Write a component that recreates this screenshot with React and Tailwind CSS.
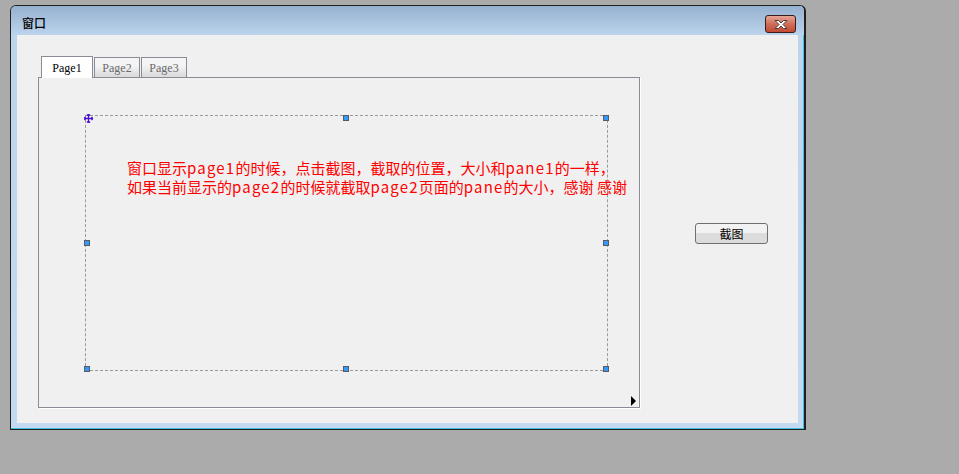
import React from 'react'

const cjk = '"Noto Sans CJK SC", "Liberation Sans", sans-serif'

function Handle({ className }) {
  return <div className={`absolute w-[6px] h-[6px] bg-[#3399ff] border border-[#5a5a5a] ${className}`} />
}

function Tab({ label, active }) {
  if (active) {
    return (
      <div className="relative z-10 -mb-px h-[22px] w-[52px] border border-b-0 border-[#898c95] bg-white flex items-center justify-center text-[12px] text-black font-['Liberation_Serif',serif]">
        {label}
      </div>
    )
  }
  return (
    <div className="h-[20px] w-[46px] border border-b-0 border-[#898c95] bg-gradient-to-b from-[#f4f4f4] from-40% to-[#d9d9d9] flex items-center justify-center text-[12px] text-[#6a6a6a] font-['Liberation_Serif',serif]">
      {label}
    </div>
  )
}

export default function App() {
  return (
    <div className="w-[959px] h-[474px] bg-[#ababab] pl-[10px] pt-[5px]" style={{ fontFamily: cjk }}>
      <div className="w-[796px] h-[425px] border border-[#202020] border-r-2 rounded-t-[6px] overflow-hidden bg-gradient-to-b from-[#bcd4ec] to-[#c4daf0] flex flex-col">
        {/* title bar */}
        <div className="h-[29px] shrink-0 flex items-start justify-between pl-[11px] pr-[8px] bg-gradient-to-b from-[#96b1d0] to-[#bcd4ec]">
          <span className="mt-[10px] text-[12px] leading-[14px] text-black font-medium">窗口</span>
          <div className="mt-[9px] w-[31px] h-[18px] rounded-[3px] border border-[#3a1c1c] bg-gradient-to-b from-[#e6a595] via-[#d06d58] via-50% to-[#c14a33] flex items-center justify-center">
            <svg width="16" height="11" viewBox="0 0 16 11">
              <path d="M2 1.5 L5.5 1.5 L8 4 L10.5 1.5 L14 1.5 L10 5.5 L14 9.5 L10.5 9.5 L8 7 L5.5 9.5 L2 9.5 L6 5.5 Z" fill="#ffffff" stroke="#4a3a3a" strokeWidth="1" strokeLinejoin="round" />
            </svg>
          </div>
        </div>
        {/* frame + client */}
        <div className="flex-1 flex pl-[6px] pr-[5px] pb-[5px] border-r border-b border-r-[#3ec0e0] border-b-[#3ec0e0]">
          <div className="flex-1 bg-[#f0f0f0] flex items-start pl-[21px] pt-[21px]">
            <div className="flex flex-col">
              {/* tabs */}
              <div className="flex items-end pl-[3px] gap-px">
                <Tab label="Page1" active />
                <Tab label="Page2" />
                <Tab label="Page3" />
              </div>
              {/* pane */}
              <div className="relative w-[602px] h-[331px] border border-[#898c95] bg-[#f0f0f0] shadow-[1px_1px_0_#ffffff] pl-[46px] pt-[37px]">
                <div className="relative w-[523px] h-[256px] border border-dashed border-[#9a9a9a] pl-[41px] pt-[42px]">
                  <div className="text-[15px] leading-[19px] text-[#ff0000] whitespace-nowrap">
                    <div>窗口显示<span className="tracking-[1.2px]">page1</span>的时候，点击截图，截取的位置，大小和<span className="tracking-[1.2px]">pane1</span>的一样，</div>
                    <div>如果当前显示的<span className="tracking-[1.2px]">page2</span>的时候就截取<span className="tracking-[1.2px]">page2</span>页面的<span className="tracking-[1.2px]">pane</span>的大小，感谢 感谢</div>
                  </div>
                  {/* move handle */}
                  <svg className="absolute -left-[2px] -top-[2px]" width="9" height="9" viewBox="0 0 9 9">
                    <path d="M4.5 0 L4.5 9 M0 4.5 L9 4.5 M3 1.5 L4.5 0 L6 1.5 M3 7.5 L4.5 9 L6 7.5 M1.5 3 L0 4.5 L1.5 6 M7.5 3 L9 4.5 L7.5 6" stroke="#4a10d8" strokeWidth="1.3" fill="none" />
                  </svg>
                  <Handle className="left-[257px] -top-px" />
                  <Handle className="-right-[2px] -top-px" />
                  <Handle className="-left-[2px] top-[124px]" />
                  <Handle className="-right-[2px] top-[124px]" />
                  <Handle className="-left-[2px] -bottom-[2px]" />
                  <Handle className="left-[257px] -bottom-[2px]" />
                  <Handle className="-right-[2px] -bottom-[2px]" />
                </div>
                <svg className="absolute right-[2px] bottom-px" width="6" height="10" viewBox="0 0 6 10">
                  <path d="M0 0 L5 5 L0 10 Z" fill="#000" />
                </svg>
              </div>
            </div>
            <button className="ml-[55px] mt-[167px] w-[73px] h-[21px] rounded-[3px] border border-[#707070] bg-gradient-to-b from-[#f2f2f2] from-50% to-[#dcdcdc] to-50% text-[12px] leading-[14px] text-black">
              截图
            </button>
          </div>
        </div>
      </div>
    </div>
  )
}
